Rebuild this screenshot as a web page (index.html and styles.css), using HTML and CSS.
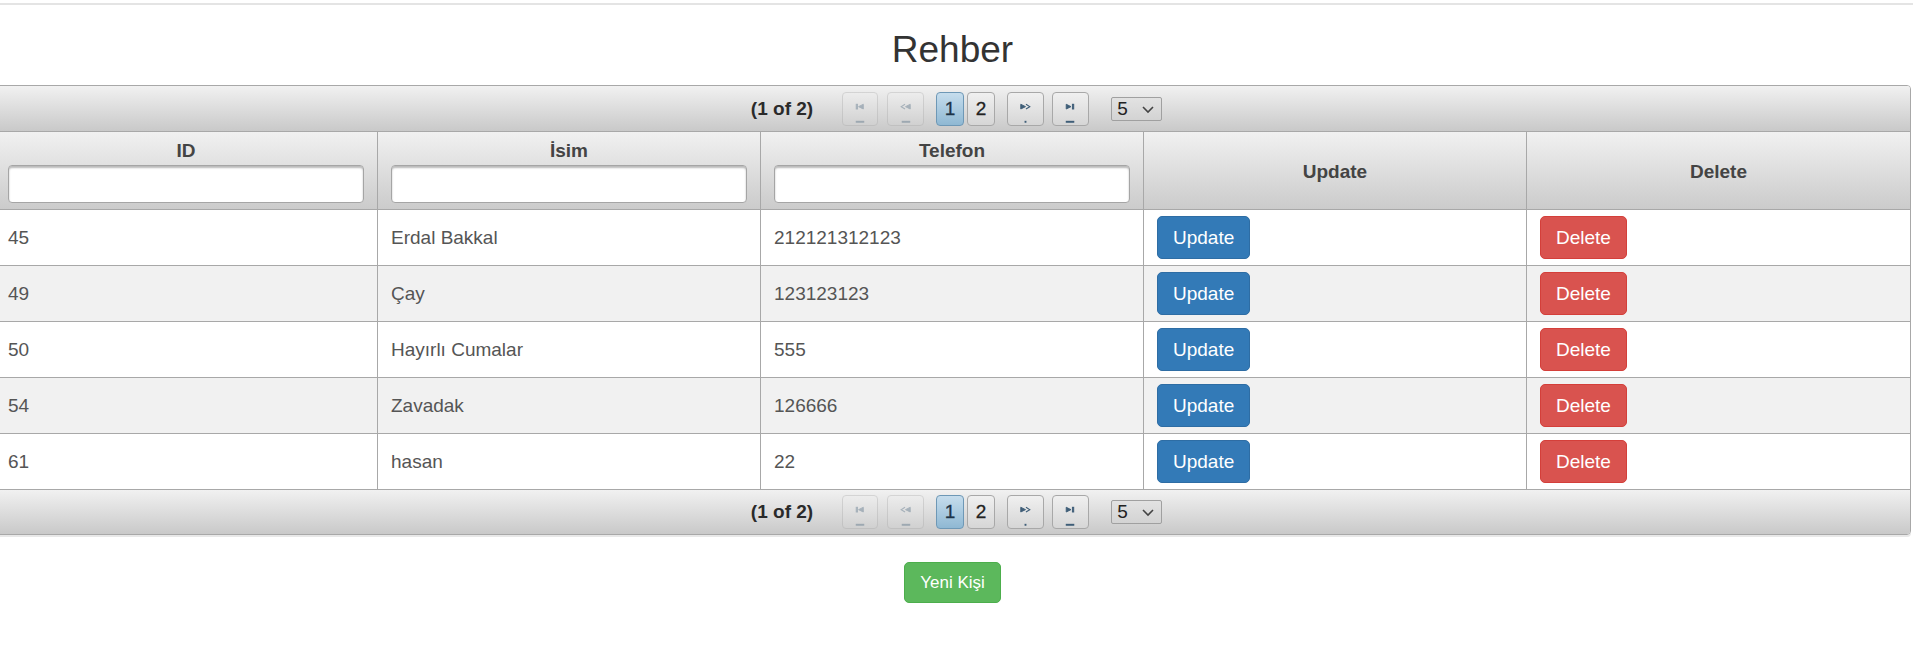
FILE: index.html
```html
<!DOCTYPE html>
<html lang="tr">
<head>
<meta charset="utf-8">
<title>Rehber</title>
<link rel="stylesheet" href="styles.css">
</head>
<body>
<div class="topline"></div>
<div class="page">
  <h1 class="title">Rehber</h1>
  <div class="datatable">
    <div class="paginator top">
      <span class="current">(1 of 2)</span>
      <span class="nav disabled first-btn"><svg width="36" height="34" viewBox="0 0 36 34"><rect x="14" y="12" width="1.4" height="5"/><polygon points="21.5,12 16.5,14.5 21.5,17"/><rect x="14" y="30" width="8" height="1"/></svg></span>
      <span class="nav disabled prev-btn"><svg width="37" height="34" viewBox="0 0 37 34"><polyline points="18,12 14,14.5 18,17" fill="none" stroke-width="1.2"/><polygon points="23.5,12 18.5,14.5 23.5,17"/><rect x="15" y="30" width="8" height="1"/></svg></span>
      <span class="page-no active">1</span>
      <span class="page-no">2</span>
      <span class="nav next-btn"><svg width="37" height="34" viewBox="0 0 37 34"><polygon points="13.5,12 18.5,14.5 13.5,17"/><polyline points="19,12 23,14.5 19,17" fill="none" stroke-width="1.2"/><rect x="18" y="30" width="1" height="1"/></svg></span>
      <span class="nav last-btn"><svg width="37" height="34" viewBox="0 0 37 34"><polygon points="14,12 19,14.5 14,17"/><rect x="20.5" y="12" width="1.4" height="5"/><rect x="14" y="30" width="8" height="1"/></svg></span>
      <span class="rows-select"><span class="sel-val">5</span><svg width="14" height="10" viewBox="0 0 14 10"><polyline points="2,3 7,8 12,3" fill="none" stroke="#444" stroke-width="1.6"/></svg></span>
    </div>
    <table class="grid">
      <thead>
        <tr>
          <th><div class="th-label">ID</div><input class="filter" type="text"></th>
          <th><div class="th-label">İsim</div><input class="filter" type="text"></th>
          <th><div class="th-label">Telefon</div><input class="filter" type="text"></th>
          <th><div class="th-label">Update</div></th>
          <th><div class="th-label">Delete</div></th>
        </tr>
      </thead>
      <tbody>
        <tr>
          <td>45</td><td>Erdal Bakkal</td><td>212121312123</td>
          <td><button class="btn btn-primary">Update</button></td>
          <td><button class="btn btn-danger">Delete</button></td>
        </tr>
        <tr class="odd">
          <td>49</td><td>Çay</td><td>123123123</td>
          <td><button class="btn btn-primary">Update</button></td>
          <td><button class="btn btn-danger">Delete</button></td>
        </tr>
        <tr>
          <td>50</td><td>Hayırlı Cumalar</td><td>555</td>
          <td><button class="btn btn-primary">Update</button></td>
          <td><button class="btn btn-danger">Delete</button></td>
        </tr>
        <tr class="odd">
          <td>54</td><td>Zavadak</td><td>126666</td>
          <td><button class="btn btn-primary">Update</button></td>
          <td><button class="btn btn-danger">Delete</button></td>
        </tr>
        <tr>
          <td>61</td><td>hasan</td><td>22</td>
          <td><button class="btn btn-primary">Update</button></td>
          <td><button class="btn btn-danger">Delete</button></td>
        </tr>
      </tbody>
    </table>
    <div class="paginator bottom">
      <span class="current">(1 of 2)</span>
      <span class="nav disabled first-btn"><svg width="36" height="34" viewBox="0 0 36 34"><rect x="14" y="12" width="1.4" height="5"/><polygon points="21.5,12 16.5,14.5 21.5,17"/><rect x="14" y="30" width="8" height="1"/></svg></span>
      <span class="nav disabled prev-btn"><svg width="37" height="34" viewBox="0 0 37 34"><polyline points="18,12 14,14.5 18,17" fill="none" stroke-width="1.2"/><polygon points="23.5,12 18.5,14.5 23.5,17"/><rect x="15" y="30" width="8" height="1"/></svg></span>
      <span class="page-no active">1</span>
      <span class="page-no">2</span>
      <span class="nav next-btn"><svg width="37" height="34" viewBox="0 0 37 34"><polygon points="13.5,12 18.5,14.5 13.5,17"/><polyline points="19,12 23,14.5 19,17" fill="none" stroke-width="1.2"/><rect x="18" y="30" width="1" height="1"/></svg></span>
      <span class="nav last-btn"><svg width="37" height="34" viewBox="0 0 37 34"><polygon points="14,12 19,14.5 14,17"/><rect x="20.5" y="12" width="1.4" height="5"/><rect x="14" y="30" width="8" height="1"/></svg></span>
      <span class="rows-select"><span class="sel-val">5</span><svg width="14" height="10" viewBox="0 0 14 10"><polyline points="2,3 7,8 12,3" fill="none" stroke="#444" stroke-width="1.6"/></svg></span>
    </div>
  </div>
  <div class="actions">
    <button class="btn btn-success">Yeni Kişi</button>
  </div>
</div>
</body>
</html>
```
FILE: styles.css
```css
html, body {
  margin: 0;
  padding: 0;
  background: #fff;
  overflow: hidden;
}
body {
  font-family: "Liberation Sans", Arial, sans-serif;
  color: #333;
}
.topline {
  height: 2px;
  margin-top: 3px;
  background: #e4e4e4;
}
.page {
  margin-left: -6px;
  width: 1917px;
}
.title {
  margin: 24px 0 15px;
  font-size: 37px;
  line-height: 41px;
  font-weight: normal;
  text-align: center;
  color: #333;
}
.datatable {
  border: 1px solid #a8a8a8;
  border-radius: 4px;
  overflow: hidden;
  box-shadow: 0 2px 0 #e8e8e8;
}
.paginator {
  display: flex;
  align-items: center;
  justify-content: center;
  background: linear-gradient(#f1f1f1, #c9c9c9);
  padding-left: 8px;
}
.paginator.top {
  height: 45px;
  border-bottom: 1px solid #a8a8a8;
}
.paginator.bottom {
  height: 44px;
}
.current {
  font-size: 19px;
  font-weight: bold;
  color: #2a2a2a;
  margin-right: 29px;
}
.nav, .page-no {
  box-sizing: border-box;
  height: 34px;
  border: 1px solid #a8a8a8;
  border-radius: 4px;
  background: linear-gradient(#f0f0f0, #d6d6d6);
  display: flex;
  align-items: center;
  justify-content: center;
}
.nav svg {
  display: block;
  fill: #3f5e78;
  stroke: #3f5e78;
}
.nav.disabled {
  opacity: 0.35;
}
.first-btn { width: 36px; margin-right: 9px; }
.prev-btn { width: 37px; margin-right: 12px; }
.next-btn { width: 37px; margin-left: 12px; margin-right: 8px; }
.last-btn { width: 37px; margin-right: 22px; }
.page-no {
  width: 28px;
  font-size: 19px;
  color: #222;
  -webkit-text-stroke: 0.3px #222;
}
.page-no + .page-no {
  margin-left: 3px;
}
.page-no.active {
  background: linear-gradient(#c6dded, #8fb8d3);
  border-color: #6e98b6;
  color: #1e3448;
  -webkit-text-stroke: 0.3px #1e3448;
}
.rows-select {
  box-sizing: border-box;
  width: 51px;
  height: 24px;
  border: 1px solid #a0a0a0;
  border-radius: 2px;
  background: linear-gradient(#e2e2e2, #d3d3d3);
  display: flex;
  align-items: center;
  justify-content: space-between;
  padding: 0 6px 0 5px;
  font-size: 19px;
  color: #222;
}
.rows-select svg {
  display: block;
}
.grid {
  width: 100%;
  table-layout: fixed;
  border-collapse: separate;
  border-spacing: 0;
  font-size: 19px;
}
.grid th, .grid td {
  border-right: 1px solid #a8a8a8;
  border-bottom: 1px solid #a8a8a8;
  padding: 6px 13px;
}
.grid th:last-child, .grid td:last-child {
  border-right: none;
}
.grid th {
  padding-top: 8px;
  padding-bottom: 6px;
  background: linear-gradient(#f1f1f1, #cbcbcb);
  color: #444;
  font-weight: bold;
  text-align: center;
  vertical-align: middle;
}
.th-label {
  line-height: 22px;
}
.filter {
  display: block;
  box-sizing: border-box;
  width: 100%;
  height: 38px;
  margin-top: 3px;
  border: 1px solid #a5a5a5;
  border-radius: 4px;
  background: #fff;
  box-shadow: inset 0 2px 2px rgba(0, 0, 0, 0.28);
  font: inherit;
  font-weight: normal;
  padding: 0 6px;
}
.grid td {
  color: #555;
  line-height: 27px;
  vertical-align: middle;
  background: #fff;
}
.grid tr.odd td {
  background: #f1f1f1;
}
.btn {
  display: inline-block;
  font-family: "Liberation Sans", Arial, sans-serif;
  font-size: 19px;
  line-height: 27px;
  padding: 7px 15px;
  border: 1px solid transparent;
  border-radius: 5px;
  color: #fff;
  cursor: pointer;
  vertical-align: middle;
}
.btn-primary {
  background: #337ab7;
  border-color: #2e6da4;
}
.btn-danger {
  background: #d9534f;
  border-color: #d43f3a;
}
.actions {
  text-align: center;
  margin-top: 27px;
}
.btn-success {
  background: #5cb85c;
  border-color: #4cae4c;
  font-size: 17px;
  line-height: 25px;
  padding: 7px 15px;
}
```
